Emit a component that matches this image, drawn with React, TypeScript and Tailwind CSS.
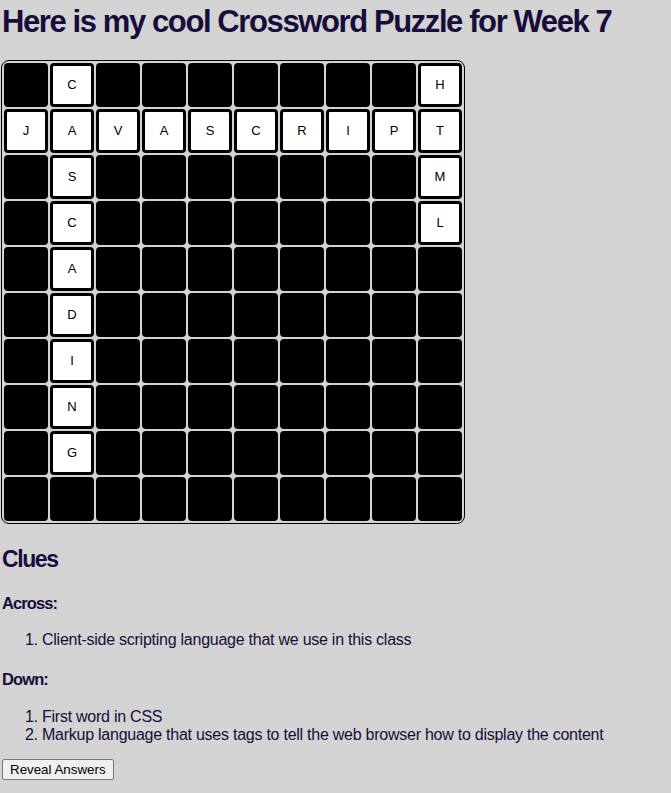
import React from "react";

const rows: string[] = [
  " C       H",
  "JAVASCRIPT",
  " S       M",
  " C       L",
  " A        ",
  " D        ",
  " I        ",
  " N        ",
  " G        ",
  "          ",
];

export default function App() {
  return (
    <div className="min-h-screen bg-[#d3d3d3] text-[#170d3a] px-[2px] pt-[3px] pb-4 [font-family:'Liberation_Sans',Arial,sans-serif]">
      <h1 className="text-[31px] font-bold leading-[37px] tracking-[-1.4px] mb-[20px] whitespace-nowrap">
        Here is my cool Crossword Puzzle for Week 7
      </h1>
      <div className="ml-[-1px] w-[464px] h-[464px] border border-black rounded-[8px] p-[2px] grid grid-cols-10 gap-[2px]">
        {rows.flatMap((row, r) =>
          row.split("").map((ch, c) =>
            ch === " " ? (
              <div key={`${r}-${c}`} className="w-[44px] h-[44px] bg-black rounded-[4px]" />
            ) : (
              <div
                key={`${r}-${c}`}
                className="w-[44px] h-[44px] bg-white border-[3px] border-black rounded-[4px] flex items-center justify-center text-[13px] text-black"
              >
                {ch}
              </div>
            )
          )
        )}
      </div>
      <h2 className="mt-[21px] text-[23px] font-bold leading-[28px] tracking-[-1.4px]">Clues</h2>
      <h3 className="mt-[20px] text-[16.5px] font-bold leading-[20px] tracking-[-0.9px]">Across:</h3>
      <ol className="mt-[18px] list-decimal pl-[40px] text-[16px] leading-[18px] tracking-[-0.25px]">
        <li>Client-side scripting language that we use in this class</li>
      </ol>
      <h3 className="mt-[20px] text-[16.5px] font-bold leading-[20px] tracking-[-0.9px]">Down:</h3>
      <ol className="mt-[19px] list-decimal pl-[40px] text-[16px] leading-[18px] tracking-[-0.25px]">
        <li>First word in CSS</li>
        <li>Markup language that uses tags to tell the web browser how to display the content</li>
      </ol>
      <button className="mt-[15px] h-[21px] px-[7px] bg-[#efefef] border border-[#767676] rounded-[2px] text-[13.33px] text-black leading-[15px]">
        Reveal Answers
      </button>
    </div>
  );
}
